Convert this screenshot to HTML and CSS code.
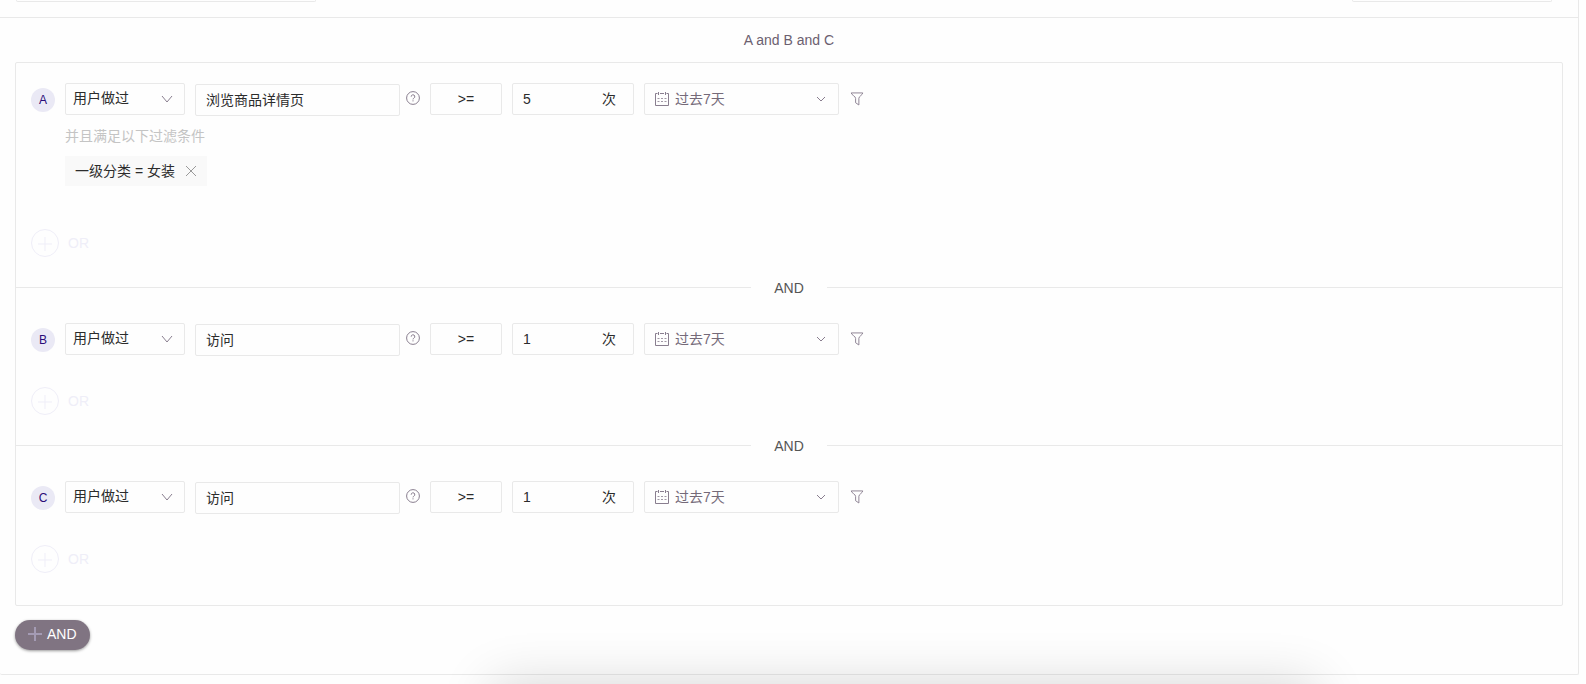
FILE: index.html
```html
<!DOCTYPE html>
<html lang="zh-CN">
<head>
<meta charset="utf-8">
<title>用户分群</title>
<link rel="stylesheet" href="styles.css">
</head>
<body>
<svg class="sprite" aria-hidden="true">
  <symbol id="i-chevron" viewBox="0 0 12 12"><path d="M1 3l5 6 5-6"/></symbol>
  <symbol id="i-chevron-small" viewBox="0 0 10 10"><path d="M1 3l4 4 4-4"/></symbol>
  <symbol id="i-help" viewBox="0 0 14 14"><circle cx="7" cy="7" r="6.4"/><path d="M5.200 5.700a1.800 1.800 0 1 1 2.600 1.500c-.6.3-.8.6-.8 1.200M7 9.300v1.100"/></symbol>
  <symbol id="i-calendar" viewBox="0 0 14 14"><path d="M2.500 1.500h-2v12h13v-12h-2M5 1.500h4M3.500 0v3M10.500 0v3"/><path d="M2.500 6.500h2M6 6.500h2M9.500 6.500h2M2.500 9.500h2M6 9.500h2M9.500 9.500h2" stroke-opacity=".8"/></symbol>
  <symbol id="i-filter" viewBox="0 0 14 15"><path d="M.8 1h12.400c0 2-4.200 3.500-4.200 5.800v7.100L5.500 11.500V6.800C5.500 4.500.8 3 .8 1z"/></symbol>
  <symbol id="i-close" viewBox="0 0 12 12"><path d="M1 1l10 10M11 1L1 11"/></symbol>
  <symbol id="i-plus" viewBox="0 0 14 14"><path d="M7 0v14M0 7h14"/></symbol>
</svg>
<main class="panel">
  <header class="toolbar">
    <div class="toolbar-box toolbar-box-wide"></div>
    <div class="toolbar-box"></div>
  </header>
  <h1 class="expression">A and B and C</h1>
  <div class="card">
    <section class="group">
      <div class="row">
        <span class="badge">A</span>
        <div class="picker action"><select aria-label="行为"><option>用户做过</option></select><svg class="icon chevron"><use href="#i-chevron"/></svg></div>
        <div class="event"><input type="text" aria-label="事件" value="浏览商品详情页"><svg class="icon help"><use href="#i-help"/></svg></div>
        <div class="picker operator"><select aria-label="比较"><option>&gt;=</option></select></div>
        <label class="count"><input type="text" aria-label="次数" value="5"><span>次</span></label>
        <button type="button" class="period"><svg class="icon calendar"><use href="#i-calendar"/></svg><span>过去7天</span><svg class="icon small"><use href="#i-chevron-small"/></svg></button>
        <button type="button" class="filter" aria-label="过滤"><svg class="icon"><use href="#i-filter"/></svg></button>
      </div>
      <div class="filters">
        <p class="hint">并且满足以下过滤条件</p>
        <span class="tag">一级分类 = 女装<button type="button" aria-label="删除"><svg class="icon"><use href="#i-close"/></svg></button></span>
      </div>
      <button type="button" class="or"><span class="ring"><svg class="icon"><use href="#i-plus"/></svg></span>OR</button>
    </section>
    <div class="divider"><span>AND</span></div>
    <section class="group">
      <div class="row">
        <span class="badge">B</span>
        <div class="picker action"><select aria-label="行为"><option>用户做过</option></select><svg class="icon chevron"><use href="#i-chevron"/></svg></div>
        <div class="event"><input type="text" aria-label="事件" value="访问"><svg class="icon help"><use href="#i-help"/></svg></div>
        <div class="picker operator"><select aria-label="比较"><option>&gt;=</option></select></div>
        <label class="count"><input type="text" aria-label="次数" value="1"><span>次</span></label>
        <button type="button" class="period"><svg class="icon calendar"><use href="#i-calendar"/></svg><span>过去7天</span><svg class="icon small"><use href="#i-chevron-small"/></svg></button>
        <button type="button" class="filter" aria-label="过滤"><svg class="icon"><use href="#i-filter"/></svg></button>
      </div>
      <button type="button" class="or"><span class="ring"><svg class="icon"><use href="#i-plus"/></svg></span>OR</button>
    </section>
    <div class="divider"><span>AND</span></div>
    <section class="group">
      <div class="row">
        <span class="badge">C</span>
        <div class="picker action"><select aria-label="行为"><option>用户做过</option></select><svg class="icon chevron"><use href="#i-chevron"/></svg></div>
        <div class="event"><input type="text" aria-label="事件" value="访问"><svg class="icon help"><use href="#i-help"/></svg></div>
        <div class="picker operator"><select aria-label="比较"><option>&gt;=</option></select></div>
        <label class="count"><input type="text" aria-label="次数" value="1"><span>次</span></label>
        <button type="button" class="period"><svg class="icon calendar"><use href="#i-calendar"/></svg><span>过去7天</span><svg class="icon small"><use href="#i-chevron-small"/></svg></button>
        <button type="button" class="filter" aria-label="过滤"><svg class="icon"><use href="#i-filter"/></svg></button>
      </div>
      <button type="button" class="or"><span class="ring"><svg class="icon"><use href="#i-plus"/></svg></span>OR</button>
    </section>
  </div>
  <button type="button" class="and"><svg class="icon"><use href="#i-plus"/></svg>AND</button>
</main>
<div class="sheet" aria-hidden="true"></div>
</body>
</html>
```
FILE: styles.css
```css
* { box-sizing: border-box; }
body {
  margin: 0;
  background: #fefefe;
  color: #2c2c2c;
  font: 14px/22px "Liberation Sans", "Noto Sans CJK SC", sans-serif;
}
button, input, select {
  font: inherit;
  color: inherit;
  margin: 0;
  padding: 0;
  border: 0;
  background: none;
  outline: 0;
}
button { cursor: pointer; }
.sprite { display: none; }
.icon {
  display: block;
  flex: none;
  width: 14px;
  height: 14px;
  fill: none;
  stroke: #897e8f;
  stroke-width: 1;
}
.panel {
  margin-right: 7px;
  padding-bottom: 24px;
  border: solid #e9e9e9;
  border-width: 0 1px 1px 0;
  border-radius: 0 0 2px 2px;
}
.toolbar {
  display: flex;
  justify-content: space-between;
  height: 18px;
  padding: 0 26px 0 16px;
  border-bottom: 1px solid #e9e9e9;
}
.toolbar-box {
  width: 200px;
  height: 2px;
  border: 1px solid #e9e9e9;
  border-top: 0;
  border-radius: 0 0 2px 2px;
}
.toolbar-box-wide { width: 300px; }
.expression {
  margin: 11px 0;
  color: #6c6070;
  font-size: 14px;
  font-weight: 400;
  text-align: center;
}
.card {
  margin: 0 15px 14px;
  border: 1px solid #e9e9e9;
  border-radius: 2px;
}
.group { padding: 25px 15px 19px; }
.group:first-child { padding-top: 20px; }
.group:last-child { padding-bottom: 32px; }
.row {
  display: flex;
  align-items: flex-start;
  gap: 10px;
  height: 33px;
}
.badge {
  align-self: flex-end;
  width: 24px;
  height: 24px;
  margin-bottom: 4px;
  border-radius: 50%;
  background: #eae9f5;
  color: #2a0c78;
  font-size: 12px;
  line-height: 24px;
  text-align: center;
}
.picker, .event input, .count, .period {
  height: 32px;
  border: 1px solid #e9e9e9;
  border-radius: 2px;
}
.picker {
  display: grid;
  align-items: center;
}
.picker > * { grid-area: 1 / 1; }
.picker select {
  width: 100%;
  height: 30px;
  appearance: none;
}
.action { width: 120px; }
.action select { padding: 0 0 2px 7px; }
.chevron {
  justify-self: end;
  width: 12px;
  height: 12px;
  margin-right: 11px;
  pointer-events: none;
}
.event {
  display: flex;
  gap: 6px;
  padding-top: 1px;
}
.event input {
  width: 205px;
  padding: 0 10px 2px;
}
.help { margin-top: 7px; }
.operator { width: 72px; }
.operator select { text-align: center; text-align-last: center; }
.count {
  display: flex;
  align-items: center;
  width: 122px;
  padding: 0 17px 1px 10px;
}
.count input { flex: 1; min-width: 0; height: 30px; }
.period {
  display: flex;
  align-items: center;
  width: 195px;
  padding: 0 12px 0 10px;
  color: #756a79;
}
.period span { margin: 0 auto 0 6px; }
.small { width: 10px; height: 10px; }
.filter { padding: 9px 1px; }
.filters { margin: 9px 34px 0; }
.hint { margin: 0 0 9px; color: #c4c4c4; }
.tag {
  display: inline-flex;
  align-items: center;
  gap: 10px;
  height: 30px;
  padding: 0 10px;
  background: #f9f9f9;
  vertical-align: top;
}
.tag .icon { width: 12px; height: 12px; stroke: #999; }
.or {
  display: flex;
  align-items: center;
  gap: 9px;
  margin-top: 31px;
  color: #efeef8;
}
.filters + .or { margin-top: 43px; }
.ring {
  display: grid;
  place-items: center;
  width: 28px;
  height: 28px;
  padding-top: 1px;
  border: 1px solid #efeef8;
  border-radius: 14px;
}
.ring .icon { stroke: #efeef8; }
.divider {
  display: flex;
  align-items: center;
  gap: 23px;
  height: 22px;
  color: #555;
}
.divider span { padding-top: 2px; }
.divider::before, .divider::after {
  content: "";
  flex: 1;
  height: 1px;
  background: #e9e9e9;
}
.and {
  display: flex;
  align-items: center;
  gap: 5px;
  height: 30px;
  margin-left: 15px;
  padding: 0 13px 2px;
  border-radius: 15px;
  background: #807482;
  box-shadow: 0 1px 3px rgba(0, 0, 0, .4);
  color: #fff;
}
.and .icon { stroke: #a49bb4; stroke-width: 2; }
.sheet {
  position: fixed;
  top: 100%;
  left: 31%;
  right: 17%;
  height: 200px;
  box-shadow: 0 0 50px rgba(0, 0, 0, .16);
}
```
